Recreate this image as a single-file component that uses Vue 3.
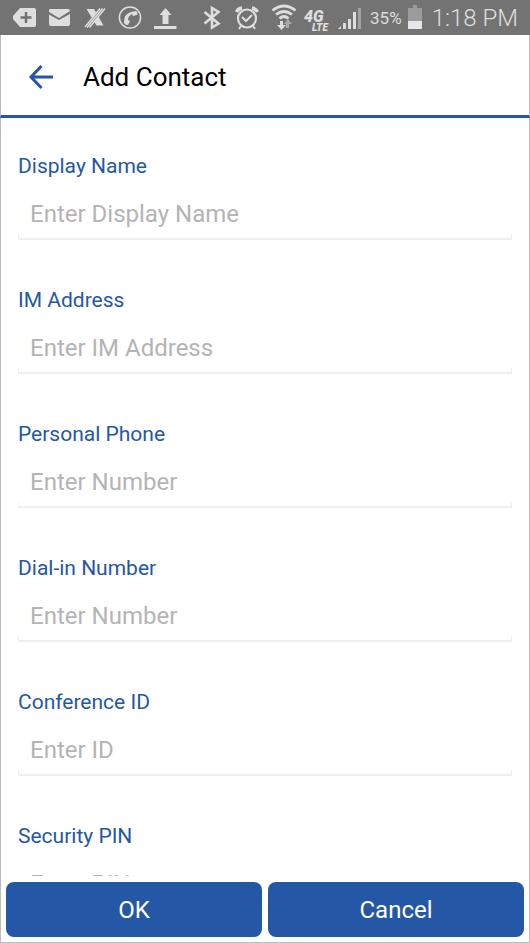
<script setup>
import { reactive } from 'vue'

const fields = [
  { id: 'display-name', label: 'Display Name', placeholder: 'Enter Display Name', type: 'text' },
  { id: 'im-address', label: 'IM Address', placeholder: 'Enter IM Address', type: 'text' },
  { id: 'personal-phone', label: 'Personal Phone', placeholder: 'Enter Number', type: 'tel' },
  { id: 'dial-in', label: 'Dial-in Number', placeholder: 'Enter Number', type: 'tel' },
  { id: 'conference-id', label: 'Conference ID', placeholder: 'Enter ID', type: 'text' },
  { id: 'security-pin', label: 'Security PIN', placeholder: 'Enter PIN', type: 'text' },
]
const contact = reactive(Object.fromEntries(fields.map((f) => [f.id, ''])))
</script>

<template>
  <div class="screen">
    <div class="status">
      <div class="notifications">
        <svg width="24" height="36" viewBox="0 0 24 36">
          <path fill="#dedede" d="M8 8H22q2 0 2 2V25q0 2-2 2H8L1 19V16Z" />
          <path stroke="#707070" stroke-width="2.400" d="M8.500 17.500H19.500M14 12V23" />
        </svg>
        <svg width="24" height="36" viewBox="0 0 24 36">
          <path fill="#dedede" d="M3 9H21q2 0 2 2L12 18 2 12V10q0-1 1-1ZM2 14.500L12 20 23 14V24q0 2-2 2H4q-2 0-2-2Z" />
        </svg>
        <svg width="24" height="36" viewBox="0 0 24 36">
          <path fill="#dedede" d="M4.500 9H12L21.500 25.500H14.500Z" />
          <path stroke="#737373" stroke-width="4" d="M5 27.500L20 9" />
          <path fill="none" stroke="#dedede" stroke-width="1.400" d="M3 27L18 8.500M5 27.500L20.500 8.500M7.500 27.500L23 8.500" />
        </svg>
        <svg width="24" height="36" viewBox="0 0 24 36">
          <circle cx="13" cy="17.500" r="10.600" fill="none" stroke="#dedede" stroke-width="1.500" />
          <path fill="#dedede" d="M14 12l5-1q2 1 1 4l-4 1-1-2q-4 2-4 6l2 1-2 4q-4 0-4-3 0-8 7-10Z" />
        </svg>
        <svg width="24" height="36" viewBox="0 0 24 36">
          <path fill="#dedede" d="M13.500 8L19.500 15H16.500V24H10.500V15H7.500ZM2 26H24.500V29H2Z" />
        </svg>
      </div>
      <div class="indicators">
        <svg width="28" height="36" viewBox="0 0 28 36">
          <path fill="none" stroke="#dedede" stroke-width="2.600" d="M6.500 12L20.500 23.500 14 27.500V8L20.500 12 6.500 23.500" />
        </svg>
        <svg width="30" height="36" viewBox="0 0 30 36">
          <circle cx="15" cy="18.500" r="9" fill="none" stroke="#dedede" stroke-width="2.200" />
          <path fill="none" stroke="#dedede" stroke-width="2" d="M10 17L14 21 20 15M9 26L7 29M21 26L23 29" />
          <path fill="none" stroke="#dedede" stroke-width="3.500" d="M4.500 12Q6 8.500 10 8M20 8Q24 8.500 25.500 12" />
        </svg>
        <svg width="30" height="36" viewBox="0 0 30 36">
          <path fill="none" stroke="#dedede" stroke-width="2.800" d="M4.500 10.500Q16 1.500 27.500 10.500M8 14.500Q16 8.500 24 14.500M11.500 18.500Q16 14.500 20.500 18.500" />
          <path fill="#dedede" d="M12 21H15V25H18L13.500 30 9 25H12Z" />
          <path fill="#a9a9a9" d="M18 28V24H16L20 19 24 24H21V28Z" />
        </svg>
        <svg width="28" height="36" viewBox="0 0 28 36">
          <text class="network"><tspan class="gen" x="0" y="22">4G</tspan><tspan class="lte" x="8" y="31">LTE</tspan></text>
        </svg>
        <svg width="26" height="36" viewBox="0 0 26 36">
          <path fill="#dedede" d="M0 29L3 26V29ZM5 23H8V29H5ZM10 19H13V29H10ZM15 12H18V29H15Z" />
          <path fill="#a2a2a2" d="M20 8H23V29H20Z" />
        </svg>
        <span class="percent">35%</span>
        <svg width="18" height="36" viewBox="0 0 18 36">
          <path fill="#9b9b9b" d="M5 5H9V8H14V22H0V8H5Z" />
          <path fill="#e6e6e6" d="M0 21H14V29H0Z" />
        </svg>
        <span class="time">1:18 PM</span>
      </div>
    </div>

    <header class="header">
      <button class="back" type="button" aria-label="Back">
        <svg width="24" height="24" viewBox="0 0 24 24">
          <path fill="none" stroke="#2557a7" stroke-width="3" d="M12.500 1L2 12 12.500 23M2 12H24" />
        </svg>
      </button>
      <h1>Add Contact</h1>
    </header>

    <form class="form" @submit.prevent>
      <div class="fields">
        <div v-for="f in fields" :key="f.id" class="field">
          <label :for="f.id">{{ f.label }}</label>
          <input :id="f.id" v-model="contact[f.id]" :type="f.type" :placeholder="f.placeholder" />
        </div>
      </div>
      <div class="actions">
        <button type="submit">OK</button>
        <button type="button">Cancel</button>
      </div>
    </form>
  </div>
</template>

<style>
body {
  margin: 0;
}
</style>

<style scoped>
.screen {
  display: flex;
  flex-direction: column;
  height: 100vh;
  background: #fff;
  font-family: Roboto, sans-serif;
}
.screen * {
  box-sizing: border-box;
}
svg {
  display: block;
  flex: none;
  overflow: visible;
}
.status {
  display: flex;
  justify-content: space-between;
  height: 35px;
  flex: none;
  padding: 0 12px;
  background: #737373;
  color: #dedede;
  overflow: hidden;
}
.notifications {
  display: flex;
  gap: 11px;
}
.indicators {
  display: flex;
  gap: 6px;
  line-height: 36px;
  white-space: nowrap;
}
.network {
  fill: #dedede;
  font-style: italic;
  font-weight: 900;
}
.gen {
  font-size: 16px;
}
.lte {
  font-size: 10px;
}
.percent {
  font-size: 17px;
}
.time {
  font-size: 24px;
  font-weight: 300;
}
.header {
  display: flex;
  align-items: center;
  gap: 18px;
  height: 83px;
  flex: none;
  padding: 4px 16px 0;
  border: 1px solid #bbb;
  border-width: 0 1px;
  border-bottom: 3px solid #2557a7;
}
.back {
  display: grid;
  place-items: center;
  width: 48px;
  height: 48px;
  padding: 0;
  border: 0;
  background: none;
}
h1 {
  margin: 0;
  font-size: 26px;
  font-weight: 400;
  line-height: 32px;
  color: #000;
}
.form {
  display: flex;
  flex-direction: column;
  flex: 1;
  min-height: 0;
  border: 1px solid #bbb;
  border-top: 0;
}
.fields {
  flex: 1;
  min-height: 0;
  padding: 35px 17px 0;
  overflow: hidden;
}
.field {
  height: 134px;
}
.field label {
  display: block;
  font-size: 21px;
  line-height: 26px;
  color: #2557a7;
}
/* The underline turns up at both ends, like the stock Android text field. */
.field input {
  display: block;
  width: 100%;
  height: 53px;
  margin-top: 8px;
  padding: 0 12px;
  border: 0;
  background:
    linear-gradient(#efefef, #efefef) left bottom / 1px 6px no-repeat,
    linear-gradient(#efefef, #efefef) right bottom / 1px 6px no-repeat,
    linear-gradient(#efefef, #efefef) left bottom / 100% 2px no-repeat;
  font-family: inherit;
  font-size: 24px;
  color: #333;
  outline: none;
}
.field input::placeholder {
  color: #b4b4b4;
  opacity: 1;
}
.actions {
  display: flex;
  gap: 6px;
  padding: 6px 5px 5px;
}
.actions button {
  flex: 1;
  height: 55px;
  border: 0;
  border-radius: 8px;
  background: #2557a7;
  color: #fff;
  font-family: inherit;
  font-size: 24px;
}
</style>
